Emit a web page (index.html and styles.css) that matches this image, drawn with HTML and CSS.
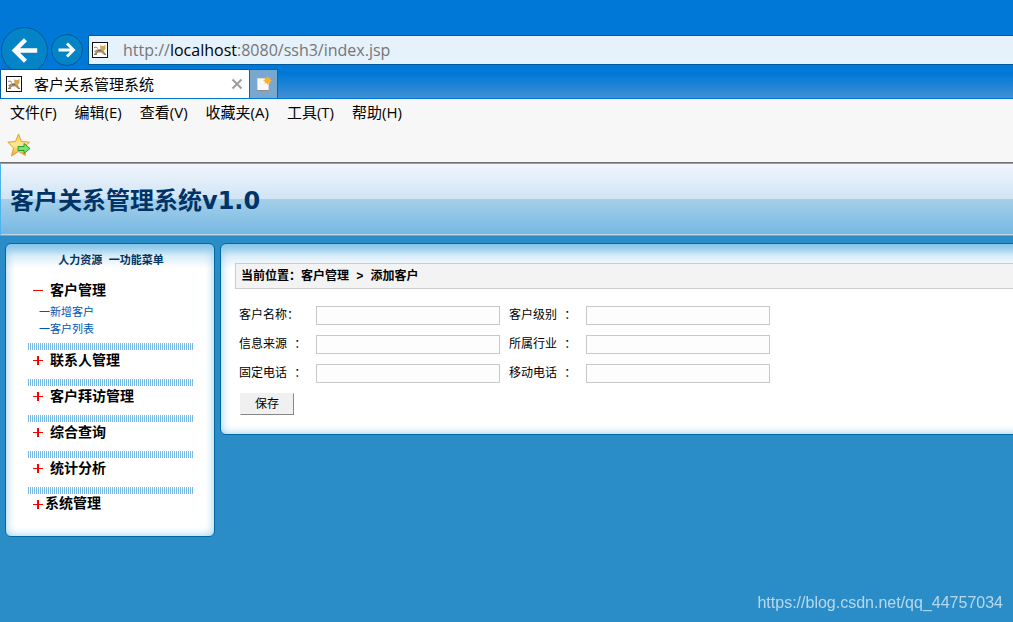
FILE: index.html
```html
<!DOCTYPE html>
<html lang="zh-CN">
<head>
<meta charset="utf-8">
<title>客户关系管理系统</title>
<link rel="stylesheet" href="styles.css">
</head>
<body>
<svg class="defs" aria-hidden="true">
  <symbol id="cat" viewBox="0 0 16 16">
    <rect x="0.5" y="0.5" width="15" height="15" fill="#fff" stroke="#111"/>
    <path d="M2 9.500L5 7.500L9 7L12 9.500L14 12.500H11.500L9.500 10.500L6 10.500L4.500 12.500H2L3.500 10.500Z" fill="#b08a5a"/>
    <path d="M8 3L9.500 4H12L13.500 2.500V7L11.500 9L8.500 7.500Z" fill="#d6a550"/>
    <path d="M2 5.500L4 5L6 6.500" fill="none" stroke="#8d8478"/>
    <path d="M2 12.500H5M12 12.500H14M6 8.500H9" fill="none" stroke="#6b5b4a" stroke-width="0.800"/>
  </symbol>
  <symbol id="plus" viewBox="0 0 10 10">
    <path d="M0 4H10V5H0ZM4 0H6V9H4Z" fill="#f00"/>
  </symbol>
  <symbol id="minus" viewBox="0 0 10 10">
    <path d="M0 4H10V5H0Z" fill="#f00"/>
  </symbol>
</svg>
<header class="chrome">
  <div class="address-row">
    <button class="nav-btn back" aria-label="后退"><svg viewBox="0 0 46 46"><path d="M36 23H14M24 12L13 23L24 34" fill="none" stroke="#fff" stroke-width="4.500"/></svg></button>
    <button class="nav-btn forward" aria-label="前进"><svg viewBox="0 0 32 32"><path d="M7 16H23M16 9L23 16L16 23" fill="none" stroke="#fff" stroke-width="3"/></svg></button>
    <div class="address">
      <svg class="favicon"><use href="#cat"/></svg>
      <div class="url" role="textbox" contenteditable="true" aria-label="地址" spellcheck="false">http://<span class="host">localhost</span>:8080/ssh3/index.jsp</div>
    </div>
  </div>
  <div class="tabs">
    <div class="tab">
      <svg class="favicon"><use href="#cat"/></svg>
      <span class="tab-title">客户关系管理系统</span>
      <button class="close" aria-label="关闭"><svg viewBox="0 0 12 12"><path d="M1.500 1.500L10.500 10.500M10.500 1.500L1.500 10.500" stroke="#a0a0a0" stroke-width="2.200"/></svg></button>
    </div>
    <button class="new-tab" aria-label="新建标签页"><svg viewBox="0 0 16 16"><path d="M1.500 2.500H12.500V14.500H1.500Z" fill="#f8f8f8" stroke="#ded8d0"/><path d="M1 14.500H13" stroke="#8c8c8c"/><path d="M11.500 0L12.300 2L14.500 1.500L14 3.500L16 4.500L14 5.500L14.500 7.500L12.300 7L11.500 9L10.500 7L8.500 7.500L9 5.500L7 4.500L9 3.500L8.500 1.500L10.500 2Z" fill="#f9b233"/></svg></button>
  </div>
  <div class="menus">
    <button>文件(F)</button><button>编辑(E)</button><button>查看(V)</button><button>收藏夹(A)</button><button>工具(T)</button><button>帮助(H)</button>
  </div>
  <div class="favorites">
    <button class="star" aria-label="添加到收藏夹"><svg viewBox="0 0 24 24"><defs><linearGradient id="gold" x1="0" y1="0" x2="0" y2="1"><stop offset="0" stop-color="#f8cf50"/><stop offset="0.500" stop-color="#ffe995"/><stop offset="1" stop-color="#efa920"/></linearGradient></defs><path d="M11.500 1L14.500 8.500L22.500 9.200L16.500 14.500L18.500 22.500L11.500 18.500L4.500 23L6.500 14.800L0.800 9.200L8.500 8.500Z" fill="url(#gold)" stroke="#d9a035" stroke-width="1" stroke-linejoin="round"/><path d="M11 13.500H17V10.500L23 15.500L17 20.500V17.500H11Z" fill="#7be070" stroke="#2a9c35"/></svg></button>
  </div>
</header>

<div class="banner"><h1>客户关系管理系统v1.0</h1></div>

<div class="layout">
  <nav class="panel sidebar">
    <h2>人力资源 一功能菜单</h2>
    <div class="group">
      <button class="group-head"><svg class="sign"><use href="#minus"/></svg>客户管理</button>
      <a href="#">一新增客户</a>
      <a href="#">一客户列表</a>
    </div>
    <div class="group"><button class="group-head"><svg class="sign"><use href="#plus"/></svg>联系人管理</button></div>
    <div class="group"><button class="group-head"><svg class="sign"><use href="#plus"/></svg>客户拜访管理</button></div>
    <div class="group"><button class="group-head"><svg class="sign"><use href="#plus"/></svg>综合查询</button></div>
    <div class="group"><button class="group-head"><svg class="sign"><use href="#plus"/></svg>统计分析</button></div>
    <div class="group"><button class="group-head tight"><svg class="sign"><use href="#plus"/></svg>系统管理</button></div>
  </nav>
  <main class="panel content">
    <div class="crumbs">当前位置：客户管理 &gt; 添加客户</div>
    <form class="form">
      <label for="name">客户名称：</label><input id="name" type="text">
      <label for="level">客户级别 ：</label><input id="level" type="text">
      <label for="source">信息来源 ：</label><input id="source" type="text">
      <label for="industry">所属行业 ：</label><input id="industry" type="text">
      <label for="phone">固定电话 ：</label><input id="phone" type="text">
      <label for="mobile">移动电话 ：</label><input id="mobile" type="text">
      <button class="save" type="button">保存</button>
    </form>
  </main>
</div>
<div class="watermark">https://blog.csdn.net/qq_44757034</div>
</body>
</html>
```

FILE: styles.css
```css
* { box-sizing: border-box; }
body {
  margin: 0;
  min-height: 100vh;
  background: #2a8dc8;
  color: #000;
  font: 12px/18px "Liberation Mono", "Noto Sans CJK SC", monospace;
  overflow-x: hidden;
}
.defs { position: absolute; width: 0; height: 0; }
button { margin: 0; padding: 0; border: 0; background: none; color: inherit; font: inherit; }
svg { display: block; }

/* browser window */
.chrome {
  background: #f7f7f7;
  border-bottom: 1px solid #707070;
  font: 15px/20px "Open Sans", "Noto Sans CJK SC", sans-serif;
}
.address-row {
  display: flex;
  align-items: flex-start;
  height: 65px;
  padding: 27px 0 0 1px;
  background: #0078d7;
}
.nav-btn { flex: none; border: 1px solid #005a9e; border-radius: 50%; background: #0284c6; }
.back { width: 47px; height: 47px; }
.forward { width: 32px; height: 32px; margin: 7px 5px 0 3px; }
.address {
  flex: 1;
  display: flex;
  align-items: center;
  gap: 15px;
  height: 30px;
  margin-top: 8px;
  padding-left: 3px;
  border: 1px solid #005a9e;
  border-right: 0;
  background: #e5f1fb;
}
.favicon { flex: none; width: 16px; height: 16px; }
.url { color: #767676; font-size: 16px; outline: 0; white-space: nowrap; }
.host { color: #000; }
.tabs {
  display: flex;
  height: 34px;
  padding-top: 4px;
  border-bottom: 1px solid #0078d7;
  background: linear-gradient(#0078d7 25%, #4090d4);
}
.tab {
  position: relative;
  display: flex;
  align-items: center;
  width: 249px;
  padding: 0 6px 0 5px;
  border: 1px solid #005a9e;
  border-width: 1px 0 0 1px;
  background: #fff;
}
.tab-title { flex: 1; padding-left: 12px; }
.close svg { width: 12px; height: 12px; }
.new-tab { width: 29px; padding-left: 6px; border: 1px solid #16629f; border-bottom: 0; background: #78a7cf; }
.new-tab svg { width: 16px; height: 16px; }
.menus { display: flex; gap: 18px; padding: 3px 10px 0; }
.favorites { height: 40px; padding: 11px 7px 0; }
.star svg { width: 24px; height: 24px; }

/* page banner */
.banner {
  padding: 19px 9px 16px;
  border: 1px solid #4db3ec;
  border-right: 0;
  background: linear-gradient(#f2f5fd, #cfe4f4 50%, #a5cfe9 50%, #74b8e2);
  box-shadow: inset 0 -1px #c5d3dc;
}
.banner h1 {
  margin: 0;
  color: #036;
  font: bold 24px/36px "DejaVu Sans", "Noto Sans CJK SC", sans-serif;
}

/* panels */
.layout { display: flex; align-items: flex-start; gap: 5px; padding: 7px 0 0 5px; overflow: hidden; }
.panel {
  border: 1px solid #0069a0;
  border-radius: 6px;
  background: linear-gradient(#7fc0e8, #d9edf8 12px, #fff 24px);
  box-shadow: inset 0 0 10px #8fcbec;
}
.sidebar { flex: none; width: 210px; padding: 8px 20px 21px 22px; }
.sidebar h2 { margin: 0 0 10px; color: #036; font-size: 11px; line-height: 18px; text-align: center; }
.group + .group { padding-top: 7px; background: repeating-linear-gradient(90deg, #77b9e2 0 1px, #fff 1px 2px) top / 100% 7px no-repeat; }
.group { padding-bottom: 7px; }
.group:first-of-type { padding-bottom: 4px; }
.group:last-child { padding-bottom: 0; }
.group-head { display: flex; align-items: center; gap: 7px; padding-left: 5px; font-size: 14px; font-weight: bold; line-height: 22px; }
.group-head.tight { gap: 2px; line-height: 21px; }
.group-head + a { margin-top: 2px; }
.sign { width: 10px; height: 10px; }
.group a { display: block; padding-left: 11px; color: #0055b5; font-size: 11px; line-height: 17px; text-decoration: none; }
.group .group-head + a { margin-top: 3px; }
.content { flex: 1; margin-right: -20px; padding: 19px 0 18px 14px; }
.crumbs { padding: 4px 5px 2px; border: 1px solid #ccc; background: #f3f3f3; font-weight: bold; }
.form {
  display: grid;
  grid-template-columns: 72px 184px 76px 184px;
  gap: 10px 5px;
  align-items: center;
  padding: 17px 0 0 4px;
}
.form label { white-space: nowrap; line-height: 19px; padding-top: 1px; height: 19px; }
.form label:nth-of-type(even) { padding-left: 4px; }
.form input { width: 184px; height: 19px; padding: 0 3px; border: 1px solid #c8c8c8; background: #fdfdfd; font: inherit; }
.save {
  width: 54px;
  height: 22px;
  margin-left: 1px;
  padding-top: 1px;
  border: 1px solid;
  border-color: #f0f0f0 #888 #888 #f0f0f0;
  background: #f0f0f0;
}
.content { padding-bottom: 19px; }
.watermark {
  position: fixed;
  right: 10px;
  bottom: 8px;
  color: rgba(255, 255, 255, 0.65);
  font: 16px/22px "Liberation Sans", sans-serif;
}
```
